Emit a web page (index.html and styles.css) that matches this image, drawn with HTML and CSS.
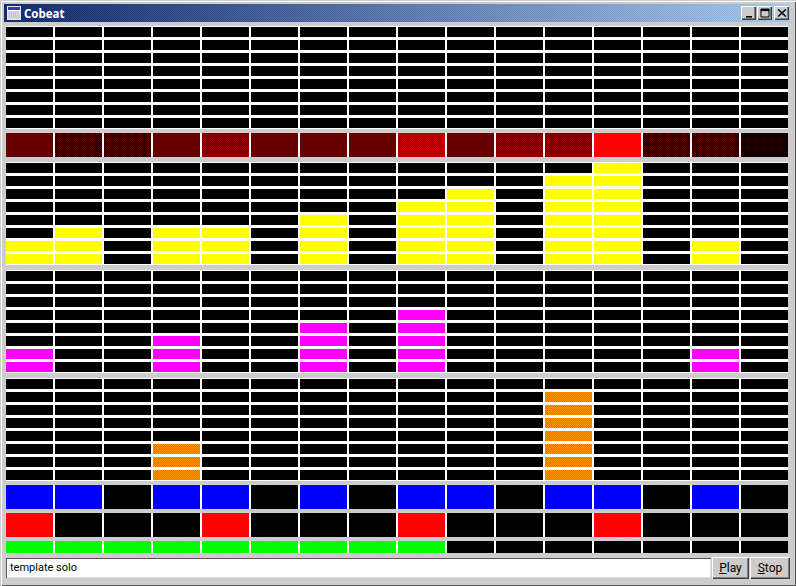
FILE: index.html
```html
<!DOCTYPE html>
<html lang="en">
<head>
<meta charset="UTF-8" />
<title>Cobeat</title>
<link rel="stylesheet" href="styles.css">
</head>
<body>

<div id="window">
  <div id="titlebar">
    <svg class="app-icon" width="14" height="14" viewBox="0 0 14 14">
      <rect x="0.5" y="0.5" width="13" height="13" fill="#ccc" stroke="#e8e8e8"/>
      <rect x="1" y="1" width="12" height="3" fill="#3a3aa8"/>
      <rect x="1" y="4" width="12" height="1" fill="#fff"/>
      <rect x="1" y="5" width="12" height="8" fill="#d8d8d8"/>
      <path d="M2 7h10M2 9h10M2 11h10" stroke="#b0b0b0" stroke-dasharray="1 1"/>
    </svg>
    <span class="title">Cobeat</span>
    <div class="caption-btns">
      <div class="cap-btn">
        <svg width="10" height="10" viewBox="0 0 10 10"><path d="M2 8h6v1.6H2z"/></svg>
      </div>
      <div class="cap-btn">
        <svg width="10" height="10" viewBox="0 0 10 10"><path d="M1 1h8v8H1zM1 1v1.6h8V1" fill="none" stroke="#000"/><path d="M1 1h8v1.5H1z"/></svg>
      </div>
      <div class="cap-btn close">
        <svg width="10" height="10" viewBox="0 0 10 10"><path d="M1.2 1.5l7.6 7M8.8 1.5l-7.6 7" stroke="#000" stroke-width="1.6" fill="none"/></svg>
      </div>
    </div>
  </div>

  <div id="panel">
    <div id="tracks"></div>

    <div id="controls">
      <div class="pattern">template solo</div>
      <button type="button" class="play"><u>P</u>lay</button>
      <button type="button" class="stop"><u>S</u>top</button>
    </div>
  </div>
</div>

<script src="script.js"></script>
</body>
</html>
```

FILE: styles.css
```css
html, body {
  margin: 0;
  height: 100%;
  overflow: hidden;
}
body {
  background: #ccc;
  font-family: Roboto, sans-serif;
}
#window {
  box-sizing: border-box;
  height: 586px;
  padding: 4px 6px 0 4px;
  background-color: #ccc;
  background-image: conic-gradient(at 1px 1px, transparent 75%, #eccaca 0);
  background-size: 5px 4px;
  box-shadow: inset 1px 1px 0 #ccc, inset 2px 2px 0 #fff, inset -1px -1px 0 #555;
}

/* title bar */
#titlebar {
  height: 18px;
  display: flex;
  align-items: center;
  padding-left: 3px;
  background:
    repeating-conic-gradient(rgba(255,255,255,.07) 0 25%, rgba(0,0,0,.05) 0 50%) 0 0 / 2px 2px,
    linear-gradient(to right, #0a246a, #a6caf0);
}
.app-icon {
  display: block;
}
.title {
  margin-left: 3px;
  color: #fff;
  font-family: "Open Sans", sans-serif;
  font-weight: 700;
  font-size: 11.5px;
}
.caption-btns {
  margin-left: auto;
  padding-right: 1px;
  display: flex;
}
.cap-btn {
  width: 15px;
  height: 14px;
  box-sizing: border-box;
  display: flex;
  align-items: center;
  justify-content: center;
  background: #ccc;
  box-shadow: inset 1px 1px 0 #fff, inset -1px -1px 0 #404040, inset -2px -2px 0 #808080;
}
.cap-btn + .cap-btn {
  margin-left: 1px;
}
.cap-btn.close {
  margin-left: 2px;
}

/* tracks */
#panel {
  padding: 3px 0 0 2px;
}
#tracks {
  width: 782px;
  display: flex;
  flex-direction: column;
  gap: 4px;
}
.grid {
  display: grid;
  grid-template-columns: repeat(16, 47px);
  column-gap: 2px;
  background: #fff;
}
.grid.tall {
  row-gap: 3px;
  padding: 1px 0;
  margin-top: 1px;
  grid-auto-rows: 10px;
}
.grid.strip {
  grid-auto-rows: 24px;
}
.grid.thin {
  grid-auto-rows: 12px;
}
.cell { background: #000; }
.yellow { background: #ff0; }
.magenta { background: #f0f; }
.blue { background: #00f; }
.red { background: #f00; }
.green { background: #0f0; }

/* fixed so the checker lands on the same pixels in every column */
.orange, .lv-dark, .lv-dim, .lv-mid, .lv-high {
  background-size: 2px 2px;
  background-position: 1px 0;
  background-attachment: fixed;
}
.orange { background-image: repeating-conic-gradient(#ff9900 0 25%, #ff6600 0 50%); }

/* levels of the top strip, dithered like a 256 colour display */
.lv-full { background: #f00; }
.lv-solid { background: #600; }
.lv-dark { background-image: repeating-conic-gradient(#500 0 25%, #000 0 50%); }
.lv-dim { background-image: repeating-conic-gradient(#200 0 25%, #000 0 50%); }
.lv-mid { background-image: repeating-conic-gradient(#900 0 25%, #600 0 50%); }
.lv-high { background-image: repeating-conic-gradient(#c00 0 25%, #900 0 50%); }

/* bottom row */
#controls {
  display: flex;
  align-items: flex-start;
  margin-top: 4px;
}
.pattern {
  box-sizing: border-box;
  width: 705px;
  height: 20px;
  margin-top: 1px;
  padding: 3px 0 0 4px;
  background: #fff;
  color: #000;
  font-size: 11px;
  line-height: 14px;
  box-shadow: inset 1px 1px 0 #555, inset -1px -1px 0 #ddd;
}
button {
  box-sizing: border-box;
  height: 22px;
  padding: 0;
  border: none;
  background: transparent;
  color: #000;
  font-family: Roboto, sans-serif;
  font-size: 12px;
  box-shadow: inset 1px 1px 0 #fff, inset -1px -1px 0 #404040, inset -2px -2px 0 #808080;
}
.play {
  width: 37px;
  margin-left: 1px;
}
.stop {
  width: 40px;
  margin-left: 1px;
}
```

FILE: script.js
```js
var COLS = 16;

// how many cells are lit per column, counted from the bottom
var yellow = [2, 3, 0, 3, 3, 0, 4, 0, 5, 6, 0, 7, 8, 0, 2, 0];
var magenta = [2, 0, 0, 3, 0, 0, 4, 0, 5, 0, 0, 0, 0, 0, 2, 0];
var orange = [0, 0, 0, 3, 0, 0, 0, 0, 0, 0, 0, 7, 0, 0, 0, 0];

var levels = ['solid', 'dark', 'dark', 'solid', 'mid', 'solid', 'solid', 'solid',
              'high', 'solid', 'mid', 'mid', 'full', 'dark', 'dark', 'dim'];

var beats = [1, 1, 0, 1, 1, 0, 1, 0, 1, 1, 0, 1, 1, 0, 1, 0];
var accents = [1, 0, 0, 0, 1, 0, 0, 0, 1, 0, 0, 0, 1, 0, 0, 0];
var steps = [1, 1, 1, 1, 1, 1, 1, 1, 1, 0, 0, 0, 0, 0, 0, 0];

var tracks = document.getElementById('tracks');

function addGrid(kind) {
  var grid = document.createElement('div');
  grid.className = 'grid ' + kind;
  tracks.appendChild(grid);
  return grid;
}

function addCell(grid, color) {
  var cell = document.createElement('div');
  cell.className = color ? 'cell ' + color : 'cell';
  grid.appendChild(cell);
}

function meter(heights, color) {
  var grid = addGrid('tall');
  for (var row = 8; row > 0; row--) {
    for (var c = 0; c < COLS; c++) {
      addCell(grid, heights[c] >= row ? color : '');
    }
  }
}

function strip(kind, flags, color) {
  var grid = addGrid(kind);
  for (var c = 0; c < COLS; c++) {
    addCell(grid, flags[c] ? color : '');
  }
}

meter([0, 0, 0, 0, 0, 0, 0, 0, 0, 0, 0, 0, 0, 0, 0, 0], '');

var levelRow = addGrid('strip');
levels.forEach(function (lv) {
  addCell(levelRow, 'lv-' + lv);
});

meter(yellow, 'yellow');
meter(magenta, 'magenta');
meter(orange, 'orange');
strip('strip', beats, 'blue');
strip('strip', accents, 'red');
strip('thin', steps, 'green');
```
